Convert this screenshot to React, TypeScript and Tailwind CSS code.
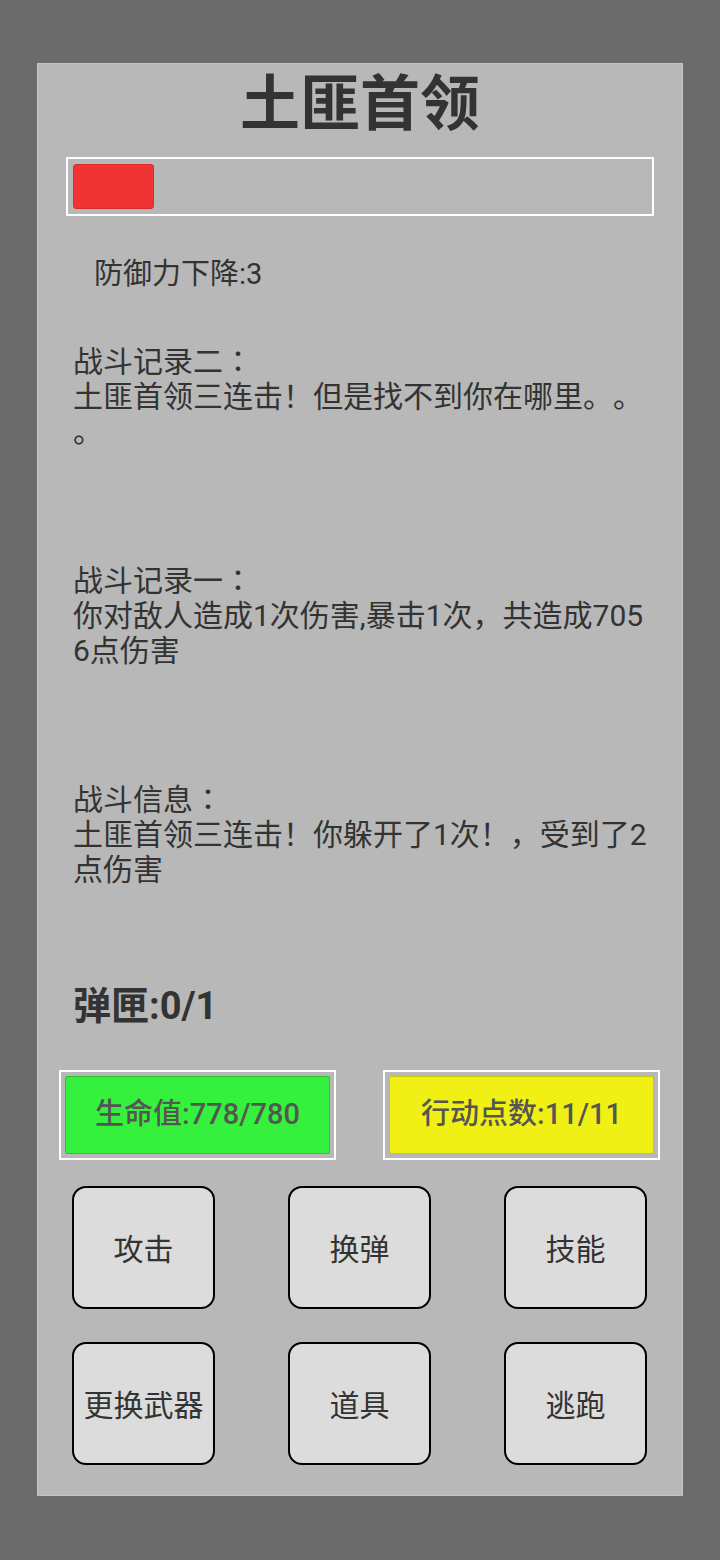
import React from 'react';

const logs = [
  { title: '战斗记录二', body: '土匪首领三连击！但是找不到你在哪里。。。' },
  { title: '战斗记录一', body: '你对敌人造成1次伤害,暴击1次，共造成7056点伤害' },
  { title: '战斗信息', body: '土匪首领三连击！你躲开了1次！，受到了2点伤害' },
];

const actions = ['攻击', '换弹', '技能', '更换武器', '道具', '逃跑'];

export default function App() {
  return (
    <div
      className="w-[720px] h-[1560px] bg-[#6b6b6b] pt-[63px] pl-[37px] [text-spacing-trim:space-all]"
      style={{ fontFamily: "Roboto, 'Noto Sans CJK SC', sans-serif" }}
    >
      <div className="w-[646px] h-[1433px] bg-[#b8b8b8] border border-[#c4c4c4] flex flex-col text-[#333333]">
        {/* Title */}
        <h1 className="mt-[11px] text-center text-[60px] leading-[60px] font-bold">土匪首领</h1>

        {/* Enemy HP bar */}
        <div className="mt-[22px] ml-[28px] w-[588px] h-[59px] border-2 border-white p-[5px]">
          <div className="w-[81px] h-full bg-[#f03434] rounded-[3px] border border-[#d82c2c]" />
        </div>

        {/* Debuff */}
        <div className="mt-[40px] ml-[56px] text-[29px] leading-[36px]">防御力下降:3</div>

        {/* Battle logs */}
        <div className="mt-[50px] ml-[35px] w-[582px] flex flex-col">
          {logs.map((log) => (
            <div key={log.title} className="h-[219px] text-[30px] leading-[35px] break-all [line-break:anywhere]">
              <div>
                {log.title}
                <span style={{ fontFamily: "'Noto Sans CJK TC', sans-serif" }}>：</span>
              </div>
              <div>{log.body}</div>
            </div>
          ))}
        </div>

        {/* Magazine */}
        <div className="mt-[-17px] ml-[35px] text-[38px] leading-[48px] font-bold">弹匣:0/1</div>

        {/* Stats */}
        <div className="mt-[40px] ml-[21px] flex gap-[47px]">
          <div className="w-[277px] h-[90px] border-2 border-white p-[4px]">
            <div className="h-full bg-[#35f03c] border border-[#2cc232] rounded-[2px] flex items-center justify-center text-[29px] font-medium text-[#555555]">
              生命值:778/780
            </div>
          </div>
          <div className="w-[277px] h-[90px] border-2 border-white p-[4px]">
            <div className="h-full bg-[#f0f014] border border-[#c8c810] rounded-[2px] flex items-center justify-center text-[29px] font-medium text-[#555555]">
              行动点数:11/11
            </div>
          </div>
        </div>

        {/* Actions */}
        <div className="mt-[26px] ml-[34px] grid grid-cols-[143px_143px_143px] gap-x-[73px] gap-y-[33px]">
          {actions.map((a) => (
            <button
              key={a}
              type="button"
              className="h-[123px] pt-[3px] bg-[#dcdcdc] border-2 border-black rounded-[14px] flex items-center justify-center text-[30px] text-[#333333] whitespace-nowrap"
            >
              {a}
            </button>
          ))}
        </div>
      </div>
    </div>
  );
}
